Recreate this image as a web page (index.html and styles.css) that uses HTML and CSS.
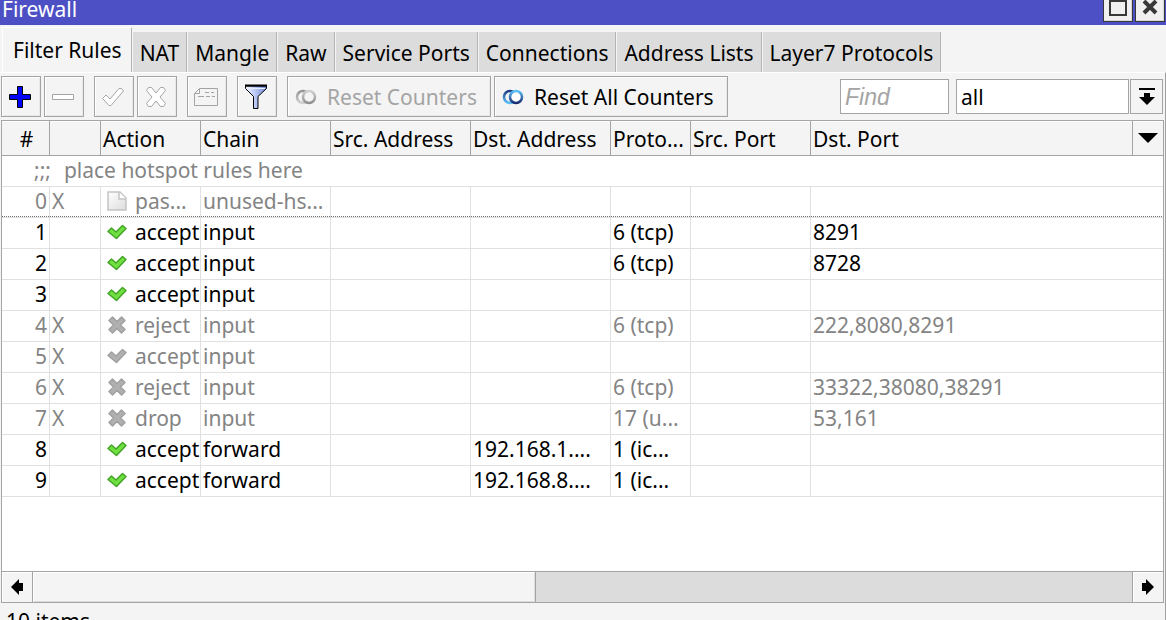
FILE: index.html
```
<!DOCTYPE html>
<html lang="en">
<head>
<meta charset="utf-8">
<title>Firewall</title>
<link rel="stylesheet" href="styles.css">
</head>
<body>
<svg class="defs" aria-hidden="true">
  <defs>
    <linearGradient id="blueA" x1="0" y1="0" x2="0" y2="1"><stop offset="0" stop-color="#1b3c86"/><stop offset="1" stop-color="#5cc0f8"/></linearGradient>
    <linearGradient id="blueB" x1="0" y1="0" x2="0" y2="1"><stop offset="0" stop-color="#5cc0f8"/><stop offset="1" stop-color="#1b2c70"/></linearGradient>
    <linearGradient id="grayA" x1="0" y1="0" x2="0" y2="1"><stop offset="0" stop-color="#949494"/><stop offset="1" stop-color="#d0d0d0"/></linearGradient>
    <linearGradient id="grayB" x1="0" y1="0" x2="0" y2="1"><stop offset="0" stop-color="#cfcfcf"/><stop offset="1" stop-color="#909090"/></linearGradient>
    <linearGradient id="funnel" x1="0" y1="0" x2="1" y2="0"><stop offset="0" stop-color="#f4f7ff"/><stop offset=".45" stop-color="#bccaf5"/><stop offset="1" stop-color="#6f85cf"/></linearGradient>
    <linearGradient id="sheet" x1="0" y1="0" x2="1" y2="1"><stop offset="0" stop-color="#fff"/><stop offset="1" stop-color="#dcdcdc"/></linearGradient>
    <symbol id="tick" viewBox="0 0 20 16"><path d="M1 7.500 4.500 4 9 8 15.500 1.500 19 4.500 9.500 14.500z" stroke-width="1.500" stroke-linejoin="round"/></symbol>
    <symbol id="cross" viewBox="0 0 20 18"><path d="M5.500 1 10 5.500 14.500 1 18 4.500 13.500 9 18 13.500 14.500 17 10 12.500 5.500 17 2 13.500 6.500 9 2 4.500z" stroke-width="1.500" stroke-linejoin="round"/></symbol>
    <symbol id="page" viewBox="0 0 20 20"><path d="M1 1H13L19 7V19H1z" fill="url(#sheet)" stroke="#c4c4c4" stroke-width="1.500"/><path d="M12 1V8H19" fill="#fff" stroke="#c4c4c4" stroke-width="1.500"/></symbol>
  </defs>
</svg>
<main class="window">
  <header class="titlebar">
    <h1 class="title">Firewall</h1>
    <div class="window-buttons">
      <button class="window-button" aria-label="Maximize"><svg width="18" height="16" viewBox="0 0 18 16"><path d="M1 1H17V15H1z" fill="none" stroke="#383838" stroke-width="2"/></svg></button>
      <button class="window-button" aria-label="Close"><svg width="18" height="16" viewBox="0 0 18 16"><path d="M3 1 15 13M15 1 3 13" stroke="#383838" stroke-width="4"/></svg></button>
    </div>
  </header>
  <nav class="tabs">
    <button class="tab tab-active">Filter Rules</button>
    <button class="tab">NAT</button>
    <button class="tab">Mangle</button>
    <button class="tab">Raw</button>
    <button class="tab">Service Ports</button>
    <button class="tab">Connections</button>
    <button class="tab">Address Lists</button>
    <button class="tab">Layer7 Protocols</button>
  </nav>
  <div class="panel">
    <div class="toolbar">
      <div class="group">
        <button class="tool" aria-label="Add"><svg width="22" height="22" viewBox="0 0 22 22"><path d="M8.500.5H13.500V8.500H21.500V13.500H13.500V21.500H8.500V13.500H.5V8.500H8.500z" fill="#0000f8" stroke="#000"/></svg></button>
        <button class="tool" aria-label="Remove" disabled><svg width="22" height="6" viewBox="0 0 22 6"><path d="M.5.5H21.500V5.500H.5z" fill="#fff" stroke="#a4a4a4"/></svg></button>
      </div>
      <div class="group">
        <button class="tool" aria-label="Enable" disabled><svg width="24" height="22" viewBox="0 0 24 22"><path d="M1.500 12.500 5 9 9 13 18 2.500H20.500L22.500 5 10 19.500H8z" fill="#fff" stroke="#a4a4a4"/></svg></button>
        <button class="tool" aria-label="Disable" disabled><svg width="22" height="22" viewBox="0 0 22 22"><path d="M3.500 1.500 6.500 1.500 11 7 15.500 1.500 18.500 1.500 20.500 4.500 15 11 20.500 17.500 18.500 20.500 15.500 20.500 11 15 6.500 20.500 3.500 20.500 1.500 17.500 7 11 1.500 4.500z" fill="#fff" stroke="#a4a4a4"/></svg></button>
      </div>
      <button class="tool" aria-label="Comment" disabled><svg width="26" height="20" viewBox="0 0 26 20"><path d="M6.500 1.500H24.500V18.500H1.500V6.500z" fill="none" stroke="#a4a4a4"/><path d="M6.500 1.500V6.500H1.500M12 5.500H16M18 5.500H21M5 9.500H11M13 9.500H17M19 9.500H22" fill="none" stroke="#a4a4a4"/></svg></button>
      <button class="tool" aria-label="Filter"><svg width="24" height="26" viewBox="0 0 24 26"><path d="M1.500 2V4.500L9.500 12.500V24.500H14V12.500L22.500 4.500V2z" fill="url(#funnel)" stroke="#000"/><path d="M1 1.500H23" stroke="#000" stroke-width="2"/><path d="M3 4.500H21" stroke="#e5edff"/></svg></button>
      <div class="group">
        <button class="tool tool-text" disabled><svg width="22" height="16" viewBox="0 0 22 16"><circle cx="8" cy="8" r="6" fill="none" stroke="url(#grayA)" stroke-width="2.500"/><circle cx="14" cy="8" r="6" fill="#f4f4f4" stroke="url(#grayB)" stroke-width="2.500"/></svg>Reset Counters</button>
        <button class="tool tool-text tool-wide"><svg width="22" height="16" viewBox="0 0 22 16"><circle cx="8" cy="8" r="6" fill="none" stroke="url(#blueA)" stroke-width="2.500"/><circle cx="14" cy="8" r="6" fill="#fff" stroke="url(#blueB)" stroke-width="2.500"/></svg>Reset All Counters</button>
      </div>
      <div class="search">
        <input class="find" type="text" placeholder="Find" aria-label="Find">
        <div class="combo">
          <select class="scope" aria-label="Chain"><option>all</option><option>input</option><option>forward</option></select>
          <button class="drop" aria-label="Show chains"><svg width="16" height="18" viewBox="0 0 16 18"><path d="M0 0H16V2H0zM5 5H11V9H16L8 17 0 9H5z"/></svg></button>
        </div>
      </div>
    </div>
    <div class="list">
      <table class="rules">
        <colgroup><col class="c-num"><col class="c-flag"><col class="c-action"><col class="c-chain"><col class="c-addr"><col class="c-addr"><col class="c-proto"><col class="c-port"><col><col class="c-menu"></colgroup>
        <thead>
          <tr><th class="hash">#</th><th></th><th>Action</th><th>Chain</th><th>Src. Address</th><th>Dst. Address</th><th>Proto...</th><th>Src. Port</th><th>Dst. Port</th><th class="menu-cell"><button class="columns" aria-label="Columns"><svg width="20" height="10" viewBox="0 0 20 10"><path d="M0 0H20L10 10z"/></svg></button></th></tr>
        </thead>
        <tbody>
          <tr class="off"><td class="note" colspan="10"><span class="note-line"><span>;;;</span> <span>place hotspot rules here</span></span></td></tr>
          <tr class="off focus"><td class="num">0</td><td>X</td><td><span class="action"><svg class="icon"><use href="#page"/></svg>pas...</span></td><td>unused-hs...</td><td></td><td></td><td></td><td></td><td colspan="2"></td></tr>
          <tr><td class="num">1</td><td></td><td><span class="action"><svg class="icon ok"><use href="#tick"/></svg>accept</span></td><td>input</td><td></td><td></td><td>6 (tcp)</td><td></td><td colspan="2">8291</td></tr>
          <tr><td class="num">2</td><td></td><td><span class="action"><svg class="icon ok"><use href="#tick"/></svg>accept</span></td><td>input</td><td></td><td></td><td>6 (tcp)</td><td></td><td colspan="2">8728</td></tr>
          <tr><td class="num">3</td><td></td><td><span class="action"><svg class="icon ok"><use href="#tick"/></svg>accept</span></td><td>input</td><td></td><td></td><td></td><td></td><td colspan="2"></td></tr>
          <tr class="off"><td class="num">4</td><td>X</td><td><span class="action"><svg class="icon dim"><use href="#cross"/></svg>reject</span></td><td>input</td><td></td><td></td><td>6 (tcp)</td><td></td><td colspan="2">222,8080,8291</td></tr>
          <tr class="off"><td class="num">5</td><td>X</td><td><span class="action"><svg class="icon dim"><use href="#tick"/></svg>accept</span></td><td>input</td><td></td><td></td><td></td><td></td><td colspan="2"></td></tr>
          <tr class="off"><td class="num">6</td><td>X</td><td><span class="action"><svg class="icon dim"><use href="#cross"/></svg>reject</span></td><td>input</td><td></td><td></td><td>6 (tcp)</td><td></td><td colspan="2">33322,38080,38291</td></tr>
          <tr class="off"><td class="num">7</td><td>X</td><td><span class="action"><svg class="icon dim"><use href="#cross"/></svg>drop</span></td><td>input</td><td></td><td></td><td>17 (u...</td><td></td><td colspan="2">53,161</td></tr>
          <tr><td class="num">8</td><td></td><td><span class="action"><svg class="icon ok"><use href="#tick"/></svg>accept</span></td><td>forward</td><td></td><td>192.168.1....</td><td>1 (ic...</td><td></td><td colspan="2"></td></tr>
          <tr><td class="num">9</td><td></td><td><span class="action"><svg class="icon ok"><use href="#tick"/></svg>accept</span></td><td>forward</td><td></td><td>192.168.8....</td><td>1 (ic...</td><td></td><td colspan="2"></td></tr>
        </tbody>
      </table>
      <div class="scrollbar">
        <button class="scroll-step" aria-label="Scroll left"><svg width="12" height="16" viewBox="0 0 12 16"><path d="M0 8 8 0V4H12V12H8V16z"/></svg></button>
        <div class="track"><div class="thumb"></div></div>
        <button class="scroll-step scroll-right" aria-label="Scroll right"><svg width="12" height="16" viewBox="0 0 12 16"><path d="M12 8 4 0V4H0V12H4V16z"/></svg></button>
      </div>
    </div>
    <footer class="status">10 items</footer>
  </div>
</main>
</body>
</html>
```
FILE: styles.css
```
* { box-sizing: border-box; }
body {
  margin: 0;
  background: #f4f4f4;
  color: #000;
  font: 21px/30px "Noto Sans", Tahoma, sans-serif;
}
button, input, select {
  margin: 0;
  padding: 0;
  border: 0;
  border-radius: 0;
  background: none;
  color: inherit;
  font: inherit;
}
svg { display: block; flex: none; }
.defs { position: absolute; width: 0; height: 0; }
.window { display: flex; flex-direction: column; height: 100vh; overflow: hidden; }

.titlebar {
  display: flex;
  justify-content: space-between;
  height: 25px;
  flex: none;
  padding: 0 1px 0 2px;
  background: #4c50c4;
  color: #fff;
}
.title { margin: 0; font-size: 21px; font-weight: 400; line-height: 18px; }
.window-buttons { display: flex; gap: 2px; }
.window-button {
  display: flex;
  justify-content: center;
  width: 30px;
  height: 22px;
  border: 1px solid #383838;
  border-top: 0;
  background: #f0f0f0;
  box-shadow: inset -1px -1px #d8d8d8;
}

.tabs { display: flex; align-items: flex-end; height: 47px; flex: none; padding-left: 2px; }
.tab {
  height: 40px;
  padding: 2px 7px 0;
  border-right: 1px solid #b4b4b4;
  border-left: 1px solid #f4f4f4;
  background: #dcdcdc;
  white-space: nowrap;
}
.tab-active {
  height: 45px;
  padding: 0 9px 0 10px;
  border-left: 1px solid #fff;
  border-top: 1px solid #fff;
  background: #f4f4f4;
}

.panel {
  display: flex;
  flex: 1;
  flex-direction: column;
  min-height: 0;
  padding: 0 1px 0 1px;
  border-top: 1px solid #fff;
  border-right: 1px solid #a0a0a0;
}
.toolbar { display: flex; gap: 10px; padding: 3px 1px 3px 0; }
.group { display: flex; gap: 3px; }
.tool {
  display: flex;
  align-items: center;
  justify-content: center;
  width: 40px;
  height: 41px;
  padding-right: 2px;
  border: 1px solid #a4a4a4;
  box-shadow: inset 1px 1px #fff, inset -1px -1px #e8e8e8;
  white-space: nowrap;
}
.tool:disabled { color: #a4a4a4; }
.tool-text { justify-content: flex-start; gap: 10px; width: 204px; padding-left: 7px; }
.tool-wide { width: 234px; }
.search { display: flex; gap: 7px; align-items: center; margin-left: auto; }
.find, .scope { height: 35px; border: 1px solid #a4a4a4; background: #fff; padding: 0 4px; }
.find { width: 109px; }
.find::placeholder { color: #a4a4a4; font: italic 23px "Liberation Sans", Arial, sans-serif; opacity: 1; }
.combo { display: flex; gap: 1px; }
.scope { width: 173px; appearance: none; }
.drop {
  display: flex;
  align-items: center;
  justify-content: center;
  width: 33px;
  height: 35px;
  border: 1px solid #a4a4a4;
}

.list {
  display: flex;
  flex: 1;
  flex-direction: column;
  justify-content: space-between;
  min-height: 0;
  border: 1px solid #a4a4a4;
  background: #fff;
}
.rules { width: 100%; table-layout: fixed; border-spacing: 0; }
.c-num { width: 48px; }
.c-flag { width: 51px; }
.c-action { width: 100px; }
.c-chain { width: 130px; }
.c-addr { width: 140px; }
.c-proto { width: 80px; }
.c-port { width: 120px; }
.c-menu { width: 30px; }
.rules th {
  height: 35px;
  padding: 3px 0 1px 2px;
  border-right: 1px solid #a4a4a4;
  border-bottom: 1px solid #a4a4a4;
  background: #f4f4f4;
  box-shadow: inset 0 1px #fff;
  font-weight: 400;
  text-align: left;
  white-space: nowrap;
}
.rules th.hash { text-align: center; padding-left: 2px; }
.rules th.menu-cell { padding: 0; border-right: 0; }
.columns { display: flex; align-items: center; justify-content: center; width: 100%; height: 34px; }
.rules td {
  height: 31px;
  padding: 0 0 2px 2px;
  border-right: 1px solid #e0e0e0;
  border-bottom: 1px solid #e0e0e0;
  line-height: 28px;
  white-space: nowrap;
}
.rules td:last-child { border-right: 0; }
.rules td.num { padding: 0 2px 2px 0; text-align: right; }
.rules td.note { padding-left: 32px; }
.note-line { display: flex; gap: 13px; }
.off { color: #848484; }
.focus td { background: repeating-linear-gradient(90deg, #707070 0 1px, #fff 1px 2px) bottom / 100% 1px no-repeat; }
.action { display: flex; align-items: center; gap: 8px; padding-left: 4px; }
.icon { width: 20px; height: 20px; }
.ok { fill: #70e040; stroke: #44a428; }
.dim { fill: #b0b0b0; stroke: #a0a0a0; }

.scrollbar { display: flex; height: 31px; flex: none; border-top: 1px solid #a4a4a4; }
.scroll-step {
  display: flex;
  align-items: center;
  justify-content: center;
  width: 31px;
  border-right: 1px solid #a4a4a4;
  background: #f4f4f4;
  box-shadow: inset 1px 1px #fff;
}
.scroll-right { border-right: 0; border-left: 1px solid #a4a4a4; }
.track { display: flex; flex: 1; background: #dcdcdc; }
.thumb { width: 45.8%; border-right: 1px solid #a4a4a4; background: #f4f4f4; box-shadow: inset 1px 1px #fff, inset -1px -1px #dcdcdc; }
.status { height: 17px; flex: none; padding: 3px 5px 0; overflow: hidden; }
```
